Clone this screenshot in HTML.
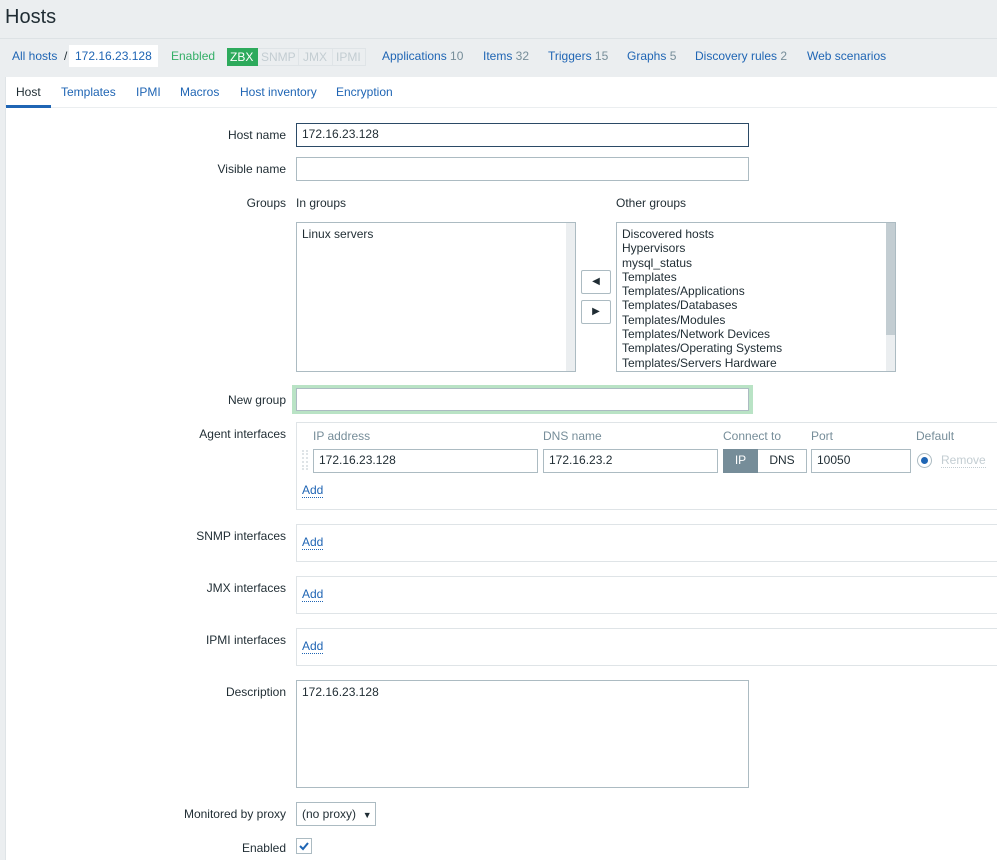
<!DOCTYPE html>
<html><head><meta charset="utf-8"><style>
*{box-sizing:border-box;margin:0;padding:0}
body{width:997px;height:860px;overflow:hidden;background:#ebeef0;font-family:"Liberation Sans",Arial,sans-serif;font-size:12px;color:#1f2c33;position:relative}
.a{position:absolute}
.lnk{color:#1f65b4}
.g{color:#768d99}
.lbl{position:absolute;right:711px;text-align:right;white-space:nowrap}
.inp{position:absolute;background:#fff;border:1px solid #acbbc2;height:24px;padding:4px 5px;white-space:nowrap}
.box{position:absolute;border:1px solid #dfe4e7;border-right:none}
.add{color:#1f65b4;border-bottom:1px dotted #1f65b4;line-height:13px}
.hdr{color:#768d99}
</style></head><body>
<div class="a" style="left:5px;top:6px;font-size:20px;color:#1f2c33">Hosts</div>
<div class="a" style="left:0;top:38px;width:997px;height:1px;background:#dde2e5"></div>
<div class="a lnk" style="left:12px;top:49px">All hosts</div>
<div class="a" style="left:64px;top:49px">/</div>
<div class="a" style="left:69px;top:45px;width:89px;height:22px;background:#fff;padding:4px 6px" ><span class="lnk">172.16.23.128</span></div>
<div class="a" style="left:171px;top:49px;color:#34af67">Enabled</div>
<div class="a" style="left:227px;top:48px;height:18px;border:1px solid #dfe4e7;width:139px;background:#ebeef0"></div>
<div class="a" style="left:227px;top:48px;width:31px;height:18px;background:#2daa5c;color:#fff;padding:2px 3px">ZBX</div>
<div class="a" style="left:261px;top:50px;color:#c3cdd2">SNMP</div>
<div class="a" style="left:298px;top:48px;width:1px;height:18px;background:#dfe4e7"></div>
<div class="a" style="left:303px;top:50px;color:#c3cdd2">JMX</div>
<div class="a" style="left:332px;top:48px;width:1px;height:18px;background:#dfe4e7"></div>
<div class="a" style="left:336px;top:50px;color:#c3cdd2">IPMI</div>
<div class="a lnk" style="left:382px;top:49px">Applications <span class="g">10</span></div>
<div class="a lnk" style="left:483px;top:49px">Items <span class="g">32</span></div>
<div class="a lnk" style="left:548px;top:49px">Triggers <span class="g">15</span></div>
<div class="a lnk" style="left:627px;top:49px">Graphs <span class="g">5</span></div>
<div class="a lnk" style="left:695px;top:49px">Discovery rules <span class="g">2</span></div>
<div class="a lnk" style="left:807px;top:49px">Web scenarios</div>

<div class="a" style="left:5px;top:77px;width:992px;height:783px;background:#fff;border-left:1px solid #dfe4e7"></div>
<div class="a" style="left:5px;top:107px;width:992px;height:1px;background:#ebeef0"></div>
<div class="a" style="left:16px;top:85px">Host</div>
<div class="a" style="left:6px;top:105px;width:45px;height:3px;background:#1f65b4"></div>
<div class="a lnk" style="left:61px;top:85px">Templates</div>
<div class="a lnk" style="left:136px;top:85px">IPMI</div>
<div class="a lnk" style="left:180px;top:85px">Macros</div>
<div class="a lnk" style="left:240px;top:85px">Host inventory</div>
<div class="a lnk" style="left:336px;top:85px">Encryption</div>

<div class="lbl" style="top:128px">Host name</div>
<div class="inp" style="left:296px;top:123px;width:453px;border-color:#2b4a66;padding-top:3px">172.16.23.128</div>
<div class="lbl" style="top:162px">Visible name</div>
<div class="inp" style="left:296px;top:157px;width:453px"></div>
<div class="lbl" style="top:196px">Groups</div>
<div class="a" style="left:296px;top:196px">In groups</div>
<div class="a" style="left:616px;top:196px">Other groups</div>
<div class="inp" style="left:296px;top:222px;width:280px;height:150px;padding:4px 5px">Linux servers</div>
<div class="a" style="left:566px;top:223px;width:9px;height:148px;background:#ebeef0"></div>
<div class="inp" style="left:616px;top:222px;width:280px;height:150px;padding:4px 5px;line-height:14.3px;overflow:hidden">Discovered hosts<br>Hypervisors<br>mysql_status<br>Templates<br>Templates/Applications<br>Templates/Databases<br>Templates/Modules<br>Templates/Network Devices<br>Templates/Operating Systems<br>Templates/Servers Hardware</div>
<div class="a" style="left:886px;top:223px;width:9px;height:148px;background:#ebeef0"></div>
<div class="a" style="left:886px;top:223px;width:9px;height:112px;background:#c3cdd2"></div>
<div class="a" style="left:581px;top:270px;width:30px;height:24px;border:1px solid #acbbc2;border-radius:2px;background:#fff;text-align:center;line-height:22px;font-size:10px">◀</div>
<div class="a" style="left:581px;top:300px;width:30px;height:24px;border:1px solid #acbbc2;border-radius:2px;background:#fff;text-align:center;line-height:22px;font-size:10px">▶</div>

<div class="lbl" style="top:393px">New group</div>
<div class="a" style="left:292px;top:385px;width:461px;height:29px;background:#b9e3c5"></div>
<div class="inp" style="left:296px;top:388px;width:453px;height:23px;border-color:#acbbc2"></div>

<div class="lbl" style="top:427px">Agent interfaces</div>
<div class="box" style="left:296px;top:422px;width:701px;height:88px"></div>
<div class="a hdr" style="left:313px;top:429px">IP address</div>
<div class="a hdr" style="left:543px;top:429px">DNS name</div>
<div class="a hdr" style="left:723px;top:429px">Connect to</div>
<div class="a hdr" style="left:811px;top:429px">Port</div>
<div class="a hdr" style="left:916px;top:429px">Default</div>
<div class="a" style="left:302px;top:450px;width:6px;height:20px;border-left:2px dotted #dfe4e7;border-right:2px dotted #dfe4e7"></div>
<div class="inp" style="left:313px;top:449px;width:225px;padding-top:3px">172.16.23.128</div>
<div class="inp" style="left:543px;top:449px;width:175px;padding-top:3px">172.16.23.2</div>
<div class="a" style="left:723px;top:449px;width:35px;height:24px;background:#768d99;color:#fff;text-align:center;line-height:23px">IP</div>
<div class="a" style="left:758px;top:449px;width:49px;height:24px;border:1px solid #acbbc2;border-left:none;background:#fff;text-align:center;line-height:21px">DNS</div>
<div class="inp" style="left:811px;top:449px;width:100px;padding-top:3px">10050</div>
<div class="a" style="left:917px;top:453px;width:15px;height:15px;border:1px solid #acbbc2;border-radius:50%;background:#fff"></div>
<div class="a" style="left:921px;top:457px;width:7px;height:7px;border-radius:50%;background:#1f65b4"></div>
<div class="a" style="left:941px;top:454px;color:#c3cdd2;border-bottom:1px dotted #c3cdd2;line-height:13px">Remove</div>
<div class="a add" style="left:302px;top:484px">Add</div>

<div class="lbl" style="top:529px">SNMP interfaces</div>
<div class="box" style="left:296px;top:524px;width:701px;height:38px"></div>
<div class="a add" style="left:302px;top:536px">Add</div>
<div class="lbl" style="top:581px">JMX interfaces</div>
<div class="box" style="left:296px;top:576px;width:701px;height:38px"></div>
<div class="a add" style="left:302px;top:588px">Add</div>
<div class="lbl" style="top:633px">IPMI interfaces</div>
<div class="box" style="left:296px;top:628px;width:701px;height:38px"></div>
<div class="a add" style="left:302px;top:640px">Add</div>

<div class="lbl" style="top:685px">Description</div>
<div class="inp" style="left:296px;top:680px;width:453px;height:108px;padding:4px 5px">172.16.23.128</div>
<div class="lbl" style="top:807px">Monitored by proxy</div>
<div class="inp" style="left:296px;top:802px;width:80px;padding-top:4px">(no proxy)&nbsp;&nbsp;<span style="font-size:9px">▼</span></div>
<div class="lbl" style="top:841px">Enabled</div>
<div class="a" style="left:296px;top:838px;width:16px;height:16px;border:1px solid #acbbc2;background:#fff"></div>
<svg class="a" style="left:298px;top:840px" width="12" height="12" viewBox="0 0 12 12"><path d="M2 6l3 3 5-6" stroke="#1f65b4" stroke-width="2" fill="none"/></svg>
</body></html>
